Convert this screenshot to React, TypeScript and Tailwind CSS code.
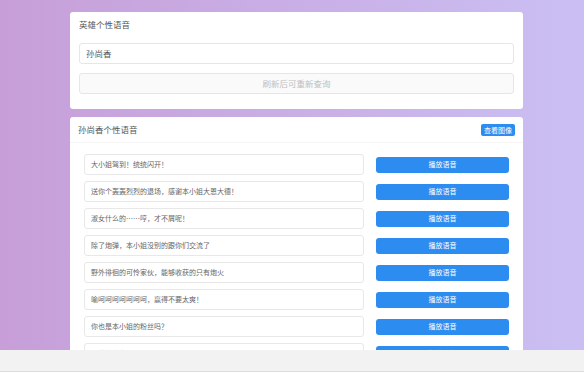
const lines = [
  "大小姐驾到！统统闪开！",
  "送你个轰轰烈烈的退场，感谢本小姐大恩大德！",
  "淑女什么的……哼，才不屑呢！",
  "除了炮弹，本小姐没别的跟你们交流了",
  "野外徘徊的可怜家伙，能够收获的只有炮火",
  "喻呵呵呵呵呵呵呵，赢得不要太爽！",
  "你也是本小姐的粉丝吗？",
  "看我的秘密武器！",
];

export default function App() {
  return (
    <div
      className="h-screen overflow-hidden bg-gradient-to-r from-[#c79ed8] to-[#cabff3] pt-3"
      style={{ fontFamily: '"Noto Sans CJK SC", "Noto Sans", sans-serif' }}
    >
      <div className="ml-[70px] w-[453px] flex flex-col gap-2">
        <div className="bg-white rounded-[3px] px-[9px] pt-[7px] pb-[15px]">
          <h3 className="text-[8.5px] leading-[10px] text-[#555] h-[10px]">英雄个性语音</h3>
          <div className="mt-[14px] h-[21px] rounded-[3px] border border-[#e6e6e6] px-[6px] flex items-center text-[8.5px] text-[#555]">
            孙尚香
          </div>
          <div className="mt-[9px] h-[21px] rounded-[3px] border border-[#e6e6e6] bg-[#fafafa] flex items-center justify-center text-[8.5px] text-[#c0c0c0]">
            刷新后可重新查询
          </div>
        </div>

        <div className="bg-white rounded-[3px]">
          <div className="h-[26px] px-[8px] flex items-center justify-between border-b border-[#f5f5f5]">
            <h3 className="text-[8.5px] text-[#555]">孙尚香个性语音</h3>
            <button className="h-[12px] px-[3px] rounded-[2px] bg-[#2d8cf0] text-white text-[7px] leading-[12px]">
              查看图像
            </button>
          </div>
          <div className="px-[14px] pt-[11px] pb-4 flex flex-col gap-[6px]">
            {lines.map((t, i) => (
              <div key={i} className="flex items-center gap-[12px]">
                <div className="w-[280px] h-[21px] rounded-[3px] border border-[#e8e8e8] px-[6px] flex items-center text-[7px] text-[#666]">
                  {t}
                </div>
                <button className="flex-1 h-[16px] rounded-[3px] bg-[#2d8cf0] text-white text-[7px]">
                  播放语音
                </button>
              </div>
            ))}
          </div>
        </div>
      </div>

      <div className="fixed left-0 right-0 top-[350px] bottom-0 bg-white">
        <div className="h-[22px] bg-[#f2f2f2] border-b border-[#dcdcdc]" />
      </div>
    </div>
  );
}
